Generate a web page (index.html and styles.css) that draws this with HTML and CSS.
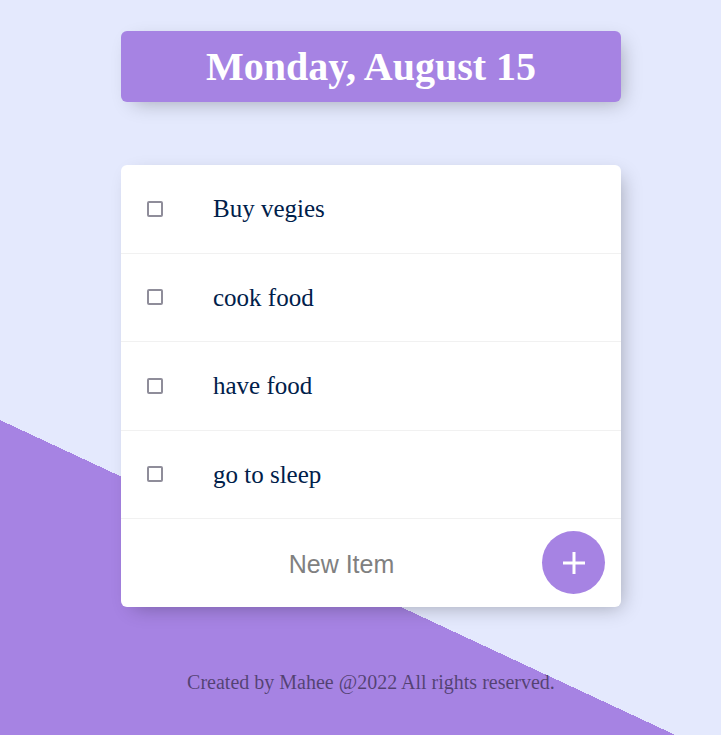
FILE: index.html
```html
<!DOCTYPE html>
<html lang="en">
<head>
<meta charset="utf-8">
<title>To Do List</title>
<link rel="stylesheet" href="styles.css">
</head>
<body>
<main class="column">
  <div class="box heading">
    <h1 class="title">Monday, August 15</h1>
  </div>
  <div class="box list">
    <div class="item"><input class="check" type="checkbox"><p class="label">Buy vegies</p></div>
    <div class="item"><input class="check" type="checkbox"><p class="label">cook food</p></div>
    <div class="item"><input class="check" type="checkbox"><p class="label">have food</p></div>
    <div class="item"><input class="check" type="checkbox"><p class="label">go to sleep</p></div>
    <form class="item add-form" onsubmit="return false">
      <input class="new-item" type="text" name="newItem" placeholder="New Item" autocomplete="off">
      <button class="add-btn" type="submit" aria-label="Add">
        <svg width="22" height="22" viewBox="0 0 22 22"><path d="M11 0V22M0 11H22" stroke="#fff" stroke-width="3"/></svg>
      </button>
    </form>
  </div>
  <footer class="footer">Created by Mahee @2022 All rights reserved.</footer>
</main>
</body>
</html>
```
FILE: styles.css
```css
html {
  height: 100%;
  background-color: #E4E9FD;
  background-image: linear-gradient(25deg, #A683E3 29.4%, #E4E9FD 29.4%);
  font-family: "Liberation Serif", "Times New Roman", serif;
}

body {
  margin: 0;
}

.column {
  width: 500px;
  margin-left: 121px;
  padding-top: 31px;
}

.box {
  background: #fff;
  border-radius: 6px;
  box-shadow: 6px 6px 19px -6px rgba(0, 0, 0, 0.3);
}

.heading {
  background-color: #A683E3;
  height: 71px;
  display: flex;
  align-items: center;
  justify-content: center;
}

.title {
  margin: 0;
  color: #fff;
  font-size: 40px;
  font-weight: bold;
  line-height: 1;
  padding-top: 1px;
}

.list {
  margin-top: 63px;
}

.item {
  height: 87.5px;
  display: flex;
  align-items: center;
  border-bottom: 1px solid #F1F1F1;
}

.item:last-child {
  border-bottom: 0;
}

.check {
  appearance: none;
  -webkit-appearance: none;
  box-sizing: border-box;
  width: 16px;
  height: 16px;
  margin: 0 0 0 26px;
  border: 2px solid #8f8d9a;
  border-radius: 2px;
  background: #fff;
  flex: none;
}

.label {
  margin: 0;
  padding: 0 0 0 50px;
  font-size: 25px;
  color: #00204a;
  line-height: 1;
}

.add-form {
  margin: 0;
  padding-left: 25px;
  gap: 5px;
}

.new-item {
  width: 391px;
  height: 60px;
  border: none;
  background: transparent;
  text-align: center;
  font-family: "Liberation Sans", Arial, sans-serif;
  font-size: 25px;
  padding: 4px 0 0;
  box-sizing: border-box;
  margin: 0;
  outline: none;
  color: #333;
}

.new-item::placeholder {
  color: grey;
  opacity: 1;
}

.add-btn {
  width: 63px;
  height: 63px;
  border-radius: 50%;
  border: 0;
  background-color: #A683E3;
  display: flex;
  align-items: center;
  justify-content: center;
  padding: 0;
  margin: 0;
  flex: none;
}

.footer {
  margin-top: 64px;
  text-align: center;
  font-size: 20px;
  color: rgba(0, 0, 0, 0.5);
}
```
